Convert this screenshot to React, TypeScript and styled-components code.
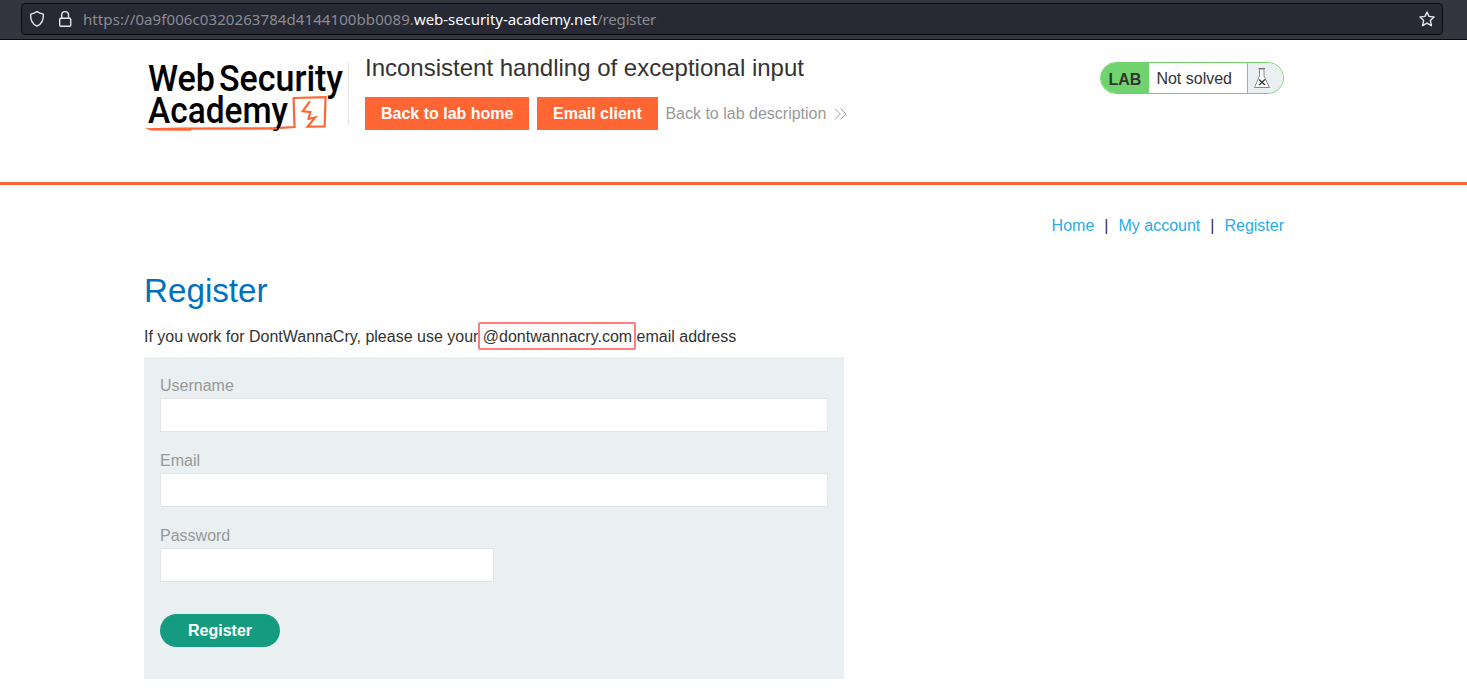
import React from 'react';
import styled, { createGlobalStyle } from 'styled-components';

const GlobalStyle = createGlobalStyle`
  *, *::before, *::after { box-sizing: border-box; }
  body {
    margin: 0;
    background: #fff;
    color: #333332;
    font-family: "Liberation Sans", Arial, sans-serif;
    font-size: 16px;
    line-height: 20px;
    overflow: hidden;
  }
`;

const Page = styled.div`
  height: 695px;
  overflow: hidden;
`;

const BrowserBar = styled.div`
  height: 40px;
  padding: 3px 24px 0 21px;
  background: #33363f;
  border-bottom: 1px solid #0b0c10;
`;

const AddressField = styled.div`
  display: flex;
  align-items: center;
  height: 32px;
  padding: 0 7px;
  background: #272935;
  border: 1px solid #0c0d12;
  border-radius: 4px;
`;

const ShieldIcon = styled.svg`
  margin-right: 12px;
`;

const LockIcon = styled.svg`
  margin-right: 10px;
`;

const Url = styled.div`
  flex: 1;
  color: #8b8c90;
  font-family: "Noto Sans", sans-serif;
  font-size: 15px;
  letter-spacing: 0.09px;
  line-height: 30px;
  white-space: pre;
`;

const Domain = styled.span`
  color: #fbfbfe;
  letter-spacing: -0.05px;
`;

const Path = styled.span`
  letter-spacing: -0.15px;
`;

const Banner = styled.header`
  height: 145px;
  border-bottom: 3px solid #ff6633;
`;

const Container = styled.div`
  display: flex;
  width: 1140px;
  margin-left: 144px;
`;

const LogoFrame = styled.div`
  width: 205px;
  height: 62px;
  margin-top: 22px;
  border-right: 1px solid #e1e3e5;
`;

const LogoArt = styled.svg`
  display: block;
  overflow: visible;
`;

const TitleBlock = styled.div`
  flex: 1;
  padding: 13px 0 0 16px;
`;

const LabTitle = styled.h2`
  margin: 0 0 14px;
  font-size: 24px;
  font-weight: 400;
  line-height: 30px;
`;

const Actions = styled.div`
  display: flex;
  align-items: center;
`;

const ActionButton = styled.a`
  height: 33px;
  margin-right: 7.5px;
  padding: 0 16px;
  background: #ff6633;
  color: #fff;
  font-weight: 700;
  line-height: 33px;
`;

const DescriptionLink = styled.a`
  display: flex;
  align-items: center;
  gap: 8px;
  color: #999;
`;

const Status = styled.div`
  display: flex;
  height: 32px;
  margin-top: 22px;
  border: 1px solid #70d36e;
  border-radius: 16px;
  overflow: hidden;
  line-height: 31px;
`;

const StatusTag = styled.span`
  width: 48px;
  padding: 1px 0 0 7.4px;
  background: #70d36e;
  font-weight: 700;
`;

const StatusText = styled.span`
  width: 98px;
  padding-left: 7.4px;
`;

const StatusIcon = styled.span`
  width: 36px;
  padding: 4px 0 0 5px;
  background: #eaeff2;
  border-left: 1px solid #70d36e;
`;

const Flask = styled.svg`
  display: block;
`;

const Main = styled.main`
  width: 1140px;
  margin-left: 144px;
  padding-top: 31px;
`;

const Nav = styled.nav`
  display: flex;
  justify-content: flex-end;
  gap: 10px;
  color: #302b55;
`;

const NavLink = styled.a`
  color: #29abe8;
`;

const Heading = styled.h1`
  margin: 35px 0 16px;
  color: #0071bc;
  font-size: 33.2px;
  font-weight: 400;
  line-height: 40px;
`;

const Hint = styled.p`
  margin: 0 0 10px;
`;

const Highlight = styled.span`
  position: relative;

  &::after {
    content: "";
    position: absolute;
    inset: -6px -4px -5px -5px;
    border: 2px solid #ff7c7c;
    border-radius: 2px;
  }
`;

const Form = styled.form`
  width: 700px;
  height: 322px;
  padding: 19px 16px 0;
  background: #eaeff2;
`;

const Label = styled.label`
  display: block;
  color: #999;
  line-height: 20px;
`;

const Input = styled.input<{ $half?: boolean }>`
  display: block;
  width: ${({ $half }) => ($half ? '334px' : '668px')};
  height: 34px;
  margin: 2px 0 19px;
  padding: 0 8px;
  background: #fff;
  border: 1px solid #e2e4e5;
  border-radius: 0;
  outline: none;
`;

const Submit = styled.button`
  display: block;
  width: 120px;
  height: 33px;
  margin-top: 32px;
  padding: 0;
  border: 0;
  border-radius: 17px;
  background: #159b80;
  color: #fff;
  font: 700 16px/33px "Liberation Sans", Arial, sans-serif;
`;

function Logo() {
  return (
    <LogoArt width="204" height="70" viewBox="144 62 204 70">
      <g fill="#000" fontFamily="Roboto, sans-serif" fontWeight="500" fontSize="37.5">
        <text x="148" y="90.7" textLength="67" lengthAdjust="spacingAndGlyphs">Web</text>
        <text x="219" y="90.7" textLength="124" lengthAdjust="spacingAndGlyphs">Security</text>
        <text x="148" y="123.4" textLength="140" lengthAdjust="spacingAndGlyphs">Academy</text>
      </g>
      <path d="M144.5 128.2 L180 127.4 L272 127.2 L272 129.6 L192 129.8 L190 130.8 L151 130.6 Z" fill="#ff6633" />
      <g fill="none" stroke="#ff6633" strokeWidth="2.2">
        <path d="M270 128.6 L277 128.4 M280 127.8 L294.5 127 L293.6 97.6" />
        <path d="M292.8 98 L325.6 97.2 L324.6 126.4 L307.6 126.6 L315.2 117.4 L308 119" />
        <path d="M309.8 101.4 L302.8 111.2 L310.3 112.2 L308.2 119.6" />
      </g>
    </LogoArt>
  );
}

export default function App() {
  return (
    <Page>
      <GlobalStyle />
      <BrowserBar>
        <AddressField>
          <ShieldIcon width="16" height="18" viewBox="0 0 16 18" fill="none" stroke="#e8e8ec" strokeWidth="1.4" strokeLinejoin="round">
            <path d="M8 1.5 C10 3.1 12.2 3.8 14.3 4.1 C14.8 9.5 12.5 14 8 16.2 C3.5 14 1.2 9.5 1.7 4.1 C3.8 3.8 6 3.1 8 1.5 Z" />
          </ShieldIcon>
          <LockIcon width="16" height="18" viewBox="0 0 16 18" fill="none" stroke="#e8e8ec" strokeWidth="1.4">
            <rect x="2.7" y="8.2" width="11" height="8" rx="1.2" />
            <path d="M4.7 8 V5 a3.4 3.4 0 0 1 6.8 0 V8" />
          </LockIcon>
          <Url>https://0a9f006c0320263784d4144100bb0089.<Domain>web-security-academy.net</Domain><Path>/register</Path></Url>
          <svg width="16" height="16" viewBox="0 0 16 16" fill="none" stroke="#e8e8ec" strokeWidth="1.4" strokeLinejoin="round">
            <path d="M8 1 L10 5.4 L15 6 L11.3 9.4 L12.4 14.7 L8 12.1 L3.6 14.7 L4.7 9.4 L1 6 L6 5.4 Z" />
          </svg>
        </AddressField>
      </BrowserBar>
      <Banner>
        <Container>
          <LogoFrame><Logo /></LogoFrame>
          <TitleBlock>
            <LabTitle>Inconsistent handling of exceptional input</LabTitle>
            <Actions>
              <ActionButton>Back to lab home</ActionButton>
              <ActionButton>Email client</ActionButton>
              <DescriptionLink>
                Back to lab description
                <svg width="13" height="12" viewBox="0 0 13 12" fill="none" stroke="#999" strokeWidth="0.9">
                  <path d="M1 0.5 L6.3 6 L1 11.5 M6.5 0.5 L11.8 6 L6.5 11.5" />
                </svg>
              </DescriptionLink>
            </Actions>
          </TitleBlock>
          <Status>
            <StatusTag>LAB</StatusTag>
            <StatusText>Not solved</StatusText>
            <StatusIcon>
              <Flask width="18" height="22" viewBox="0 0 18 22" fill="none">
                <path d="M6.5 2 V9 L1.5 20.5 H16.5 L11 9 V2 Z" fill="#fff" stroke="#888" />
                <path d="M5.5 1.5 H12" stroke="#777" />
                <path d="M6 12.5 L12 18 M12 12.5 L6 18" stroke="#333332" strokeWidth="1.3" />
              </Flask>
            </StatusIcon>
          </Status>
        </Container>
      </Banner>
      <Main>
        <Nav>
          <NavLink>Home</NavLink>
          <span>|</span>
          <NavLink>My account</NavLink>
          <span>|</span>
          <NavLink>Register</NavLink>
        </Nav>
        <Heading>Register</Heading>
        <Hint>
          If you work for DontWannaCry, please use your <Highlight>@dontwannacry.com</Highlight> email address
        </Hint>
        <Form>
          <Label htmlFor="username">Username</Label>
          <Input id="username" />
          <Label htmlFor="email">Email</Label>
          <Input id="email" />
          <Label htmlFor="password">Password</Label>
          <Input id="password" type="password" $half />
          <Submit type="button">Register</Submit>
        </Form>
      </Main>
    </Page>
  );
}
